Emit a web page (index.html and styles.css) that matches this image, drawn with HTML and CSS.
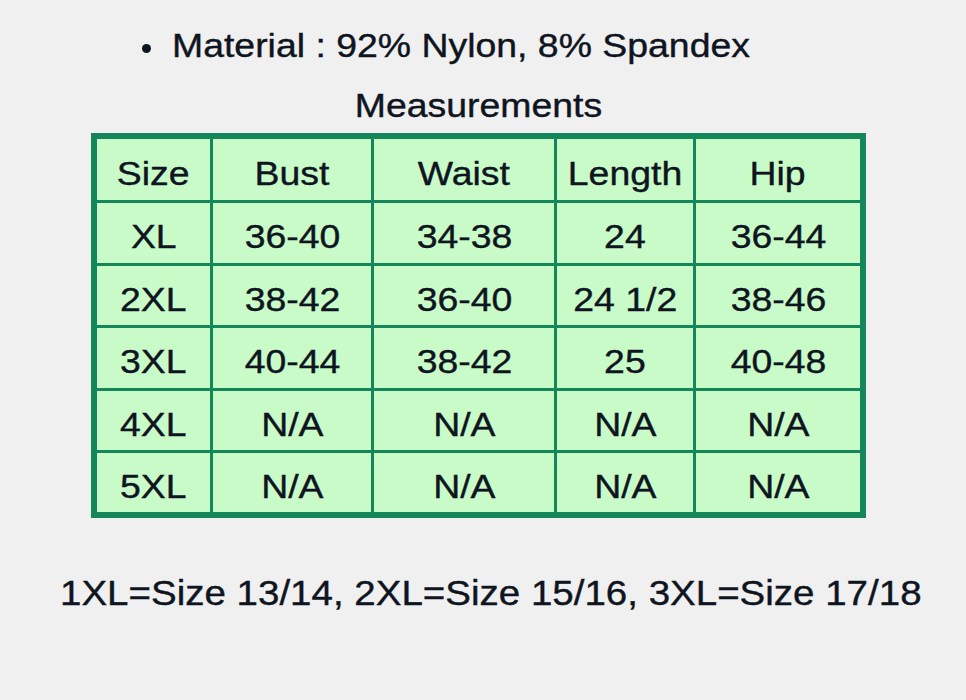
FILE: index.html
```html
<!DOCTYPE html>
<html>
<head>
<meta charset="utf-8">
<link rel="stylesheet" href="styles.css">
</head>
<body>
<div class="page">
  <div class="bullet-line">
    <span class="dot"></span>
    <span class="txt left">Material : 92% Nylon, 8% Spandex</span>
  </div>
  <div class="heading"><span class="txt">Measurements</span></div>
  <div class="table">
    <div class="cell"><span class="txt">Size</span></div>
    <div class="cell"><span class="txt">Bust</span></div>
    <div class="cell"><span class="txt">Waist</span></div>
    <div class="cell"><span class="txt">Length</span></div>
    <div class="cell"><span class="txt">Hip</span></div>

    <div class="cell"><span class="txt">XL</span></div>
    <div class="cell"><span class="txt">36-40</span></div>
    <div class="cell"><span class="txt">34-38</span></div>
    <div class="cell"><span class="txt">24</span></div>
    <div class="cell"><span class="txt">36-44</span></div>

    <div class="cell"><span class="txt">2XL</span></div>
    <div class="cell"><span class="txt">38-42</span></div>
    <div class="cell"><span class="txt">36-40</span></div>
    <div class="cell"><span class="txt">24 1/2</span></div>
    <div class="cell"><span class="txt">38-46</span></div>

    <div class="cell"><span class="txt">3XL</span></div>
    <div class="cell"><span class="txt">40-44</span></div>
    <div class="cell"><span class="txt">38-42</span></div>
    <div class="cell"><span class="txt">25</span></div>
    <div class="cell"><span class="txt">40-48</span></div>

    <div class="cell"><span class="txt">4XL</span></div>
    <div class="cell"><span class="txt">N/A</span></div>
    <div class="cell"><span class="txt">N/A</span></div>
    <div class="cell"><span class="txt">N/A</span></div>
    <div class="cell"><span class="txt">N/A</span></div>

    <div class="cell"><span class="txt">5XL</span></div>
    <div class="cell"><span class="txt">N/A</span></div>
    <div class="cell"><span class="txt">N/A</span></div>
    <div class="cell"><span class="txt">N/A</span></div>
    <div class="cell"><span class="txt">N/A</span></div>
  </div>
  <div class="footnote"><span class="txt left big">1XL=Size 13/14, 2XL=Size 15/16, 3XL=Size 17/18</span></div>
</div>
</body>
</html>
```
FILE: styles.css
```css
html, body {
  margin: 0;
  padding: 0;
  background: #f0f0f0;
}
body {
  font-family: "Liberation Sans", Arial, sans-serif;
  color: #0f1520;
}
.page {
  width: 966px;
  height: 700px;
  padding-top: 26px;
  box-sizing: border-box;
}
.txt {
  display: inline-block;
  font-size: 34px;
  line-height: 38px;
  transform: scaleX(1.1);
  white-space: nowrap;
  -webkit-text-stroke: 0.4px #0f1520;
}
.txt.left {
  transform-origin: left center;
}
.txt.big {
  font-size: 35px;
}
.bullet-line {
  display: flex;
  align-items: flex-start;
  padding-left: 142px;
  height: 38px;
}
.dot {
  width: 9px;
  height: 9px;
  border-radius: 50%;
  background: #0f1520;
  margin-top: 18px;
  margin-right: 21px;
}
.heading {
  width: 775px;
  margin-left: 91px;
  margin-top: 22px;
  text-align: center;
  height: 38px;
}
.table {
  margin-left: 91px;
  margin-top: 9px;
  width: 775px;
  box-sizing: border-box;
  border: 6px solid #13865a;
  background: #13865a;
  display: grid;
  grid-template-columns: 113px 158px 180px 136px 164px;
  grid-template-rows: 61px 60px 59px 60px 59px 59px;
  gap: 3px;
}
.cell {
  background: #c9fbc9;
  display: flex;
  align-items: center;
  justify-content: center;
  padding-top: 6px;
  box-sizing: border-box;
}
.footnote {
  margin-top: 56px;
  padding-left: 60px;
  height: 38px;
}
```
